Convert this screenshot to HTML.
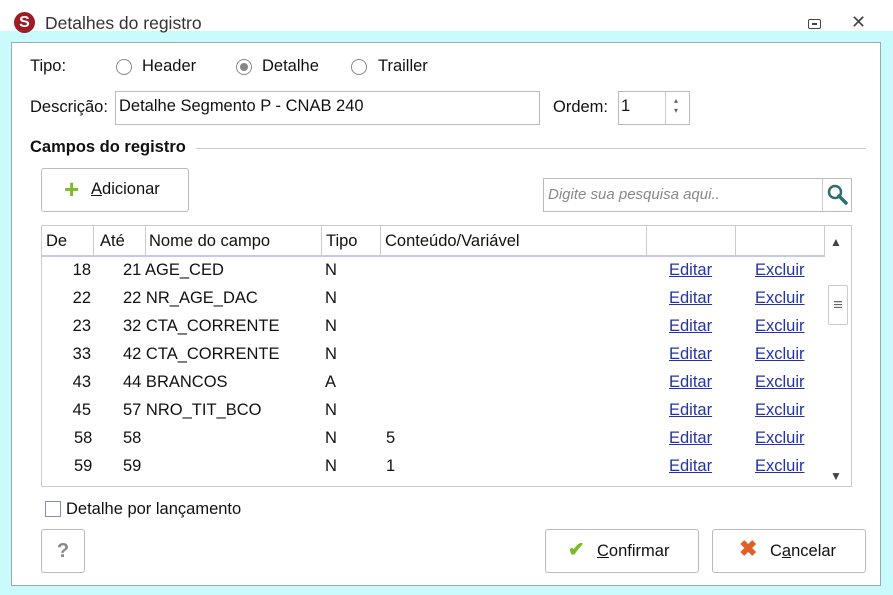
<!DOCTYPE html>
<html><head><meta charset="utf-8"><style>
*{margin:0;padding:0;box-sizing:border-box}
body{width:893px;height:595px;overflow:hidden;background:#c9fbfd;font-family:"Liberation Sans",sans-serif;font-size:16.5px;line-height:20px;color:#111;position:relative}
.a{position:absolute;white-space:nowrap}
#top{left:0;top:0;width:893px;height:31px;background:#fff}
#panel{left:11px;top:42px;width:870px;height:544px;background:#fff;border:1px solid #9aa}
.radio{width:16px;height:16px;border:1px solid #888;border-radius:50%;background:#fff}
.input{border:1px solid #bbb;background:#fff}
.btn{border:1px solid #bbb;border-radius:3px;background:#fff}
.cell{position:absolute;top:0;height:31px;border-right:1px solid #ccc;line-height:31px;padding-left:6px}
.lnk{color:#2233aa;text-decoration:underline}
.r{text-align:right;width:40px}
</style></head><body>
<div id="top" class="a"></div>
<div class="a" style="left:14px;top:12px;width:21px;height:21px;border-radius:50%;background:#9e1c24;color:#fff;font-weight:bold;font-size:16px;text-align:center;line-height:21px">S</div>
<div class="a" style="left:45px;top:13px;font-size:17.5px;color:#333">Detalhes do registro</div>
<div class="a" style="left:808px;top:19px;width:13px;height:10px;border:1.5px solid #444;border-radius:2px"></div>
<div class="a" style="left:812px;top:23px;width:5px;height:2px;background:#444"></div>
<div class="a" style="left:851px;top:12px;font-size:18px;color:#444">✕</div>
<div id="panel" class="a"></div>

<div class="a" style="left:30px;top:56px">Tipo:</div>
<div class="a radio" style="left:116px;top:59px"></div>
<div class="a" style="left:142px;top:56px">Header</div>
<div class="a radio" style="left:236px;top:59px"></div>
<div class="a" style="left:240px;top:63px;width:8px;height:8px;border-radius:50%;background:#888"></div>
<div class="a" style="left:262px;top:56px">Detalhe</div>
<div class="a radio" style="left:351px;top:59px"></div>
<div class="a" style="left:378px;top:56px">Trailler</div>

<div class="a" style="left:30px;top:97px">Descrição:</div>
<div class="a input" style="left:115px;top:91px;width:425px;height:34px"></div>
<div class="a" style="left:119px;top:96px">Detalhe Segmento P - CNAB 240</div>
<div class="a" style="left:553px;top:97px">Ordem:</div>
<div class="a input" style="left:618px;top:91px;width:72px;height:34px"></div>
<div class="a" style="left:665px;top:92px;width:1px;height:32px;background:#ccc"></div>
<div class="a" style="left:621px;top:96px">1</div>
<div class="a" style="left:674px;top:91px;font-size:8px;color:#666">▴</div>
<div class="a" style="left:674px;top:101px;font-size:8px;color:#666">▾</div>

<div class="a" style="left:30px;top:137px;font-weight:bold">Campos do registro</div>
<div class="a" style="left:196px;top:148px;width:670px;height:1px;background:#ccc"></div>

<div class="a btn" style="left:41px;top:168px;width:148px;height:44px"></div>
<div class="a" style="left:64px;top:176px;color:#7cba2a;font-size:26px;font-weight:bold;line-height:26px">+</div>
<div class="a" style="left:91px;top:179px"><u>A</u>dicionar</div>

<div class="a input" style="left:543px;top:178px;width:309px;height:34px"></div>
<div class="a" style="left:822px;top:179px;width:1px;height:32px;background:#ccc"></div>
<div class="a" style="left:548px;top:185px;font-style:italic;color:#888;font-size:15px">Digite sua pesquisa aqui..</div>
<svg class="a" style="left:826px;top:183px" width="24" height="24"><circle cx="9" cy="9" r="6" fill="none" stroke="#2e6e6e" stroke-width="2.5"/><path d="M13 13 L20 20" stroke="#2e6e6e" stroke-width="3.5" stroke-linecap="round"/></svg>

<div class="a" style="left:41px;top:225px;width:811px;height:262px;border:1px solid #ccc;background:#fff">
 <div class="a" style="left:0;top:0;width:783px;height:31px;border-bottom:2px solid #c8c8e8">
  <div class="cell" style="left:0;width:52px;padding-left:4px">De</div>
  <div class="cell" style="left:52px;width:52px">Até</div>
  <div class="cell" style="left:104px;width:176px;padding-left:3px">Nome do campo</div>
  <div class="cell" style="left:280px;width:59px;padding-left:4px">Tipo</div>
  <div class="cell" style="left:339px;width:266px;padding-left:4px">Conteúdo/Variável</div>
  <div class="cell" style="left:605px;width:89px"></div>
  <div class="cell" style="left:694px;width:89px"></div>
 </div>
 <div class="a" style="left:788px;top:6px;font-size:12px;color:#444">▲</div>
 <div class="a" style="left:786px;top:59px;width:20px;height:40px;border:1px solid #ccc;border-radius:2px;text-align:center;line-height:38px;color:#666">≡</div>
 <div class="a" style="left:788px;top:240px;font-size:12px;color:#444">▼</div>
</div>

<div style="position:absolute;left:41px;top:257px">
<div class="a r" style="top:3px;left:10px">18</div><div class="a" style="top:3px;left:82px">21 AGE_CED</div><div class="a" style="top:3px;left:284px">N</div><div class="a lnk" style="top:3px;left:628px">Editar</div><div class="a lnk" style="top:3px;left:714px">Excluir</div>
<div class="a r" style="top:31px;left:10px">22</div><div class="a" style="top:31px;left:82px">22 NR_AGE_DAC</div><div class="a" style="top:31px;left:284px">N</div><div class="a lnk" style="top:31px;left:628px">Editar</div><div class="a lnk" style="top:31px;left:714px">Excluir</div>
<div class="a r" style="top:59px;left:10px">23</div><div class="a" style="top:59px;left:82px">32 CTA_CORRENTE</div><div class="a" style="top:59px;left:284px">N</div><div class="a lnk" style="top:59px;left:628px">Editar</div><div class="a lnk" style="top:59px;left:714px">Excluir</div>
<div class="a r" style="top:87px;left:10px">33</div><div class="a" style="top:87px;left:82px">42 CTA_CORRENTE</div><div class="a" style="top:87px;left:284px">N</div><div class="a lnk" style="top:87px;left:628px">Editar</div><div class="a lnk" style="top:87px;left:714px">Excluir</div>
<div class="a r" style="top:115px;left:10px">43</div><div class="a" style="top:115px;left:82px">44 BRANCOS</div><div class="a" style="top:115px;left:284px">A</div><div class="a lnk" style="top:115px;left:628px">Editar</div><div class="a lnk" style="top:115px;left:714px">Excluir</div>
<div class="a r" style="top:143px;left:10px">45</div><div class="a" style="top:143px;left:82px">57 NRO_TIT_BCO</div><div class="a" style="top:143px;left:284px">N</div><div class="a lnk" style="top:143px;left:628px">Editar</div><div class="a lnk" style="top:143px;left:714px">Excluir</div>
<div class="a" style="top:171px;left:33px">58</div><div class="a" style="top:171px;left:82px">58</div><div class="a" style="top:171px;left:284px">N</div><div class="a" style="top:171px;left:345px">5</div><div class="a lnk" style="top:171px;left:628px">Editar</div><div class="a lnk" style="top:171px;left:714px">Excluir</div>
<div class="a" style="top:199px;left:33px">59</div><div class="a" style="top:199px;left:82px">59</div><div class="a" style="top:199px;left:284px">N</div><div class="a" style="top:199px;left:345px">1</div><div class="a lnk" style="top:199px;left:628px">Editar</div><div class="a lnk" style="top:199px;left:714px">Excluir</div>
</div>

<div class="a" style="left:45px;top:501px;width:16px;height:16px;border:1px solid #8888bb;background:#fff"></div>
<div class="a" style="left:66px;top:499px">Detalhe por lançamento</div>

<div class="a btn" style="left:41px;top:529px;width:44px;height:44px;text-align:center;line-height:42px;color:#888;font-size:20px;font-weight:bold">?</div>
<div class="a btn" style="left:545px;top:529px;width:154px;height:44px"></div>
<div class="a" style="left:568px;top:540px;color:#7cba2a;font-size:20px;font-weight:bold">✔</div>
<div class="a" style="left:597px;top:541px"><u>C</u>onfirmar</div>
<div class="a btn" style="left:712px;top:529px;width:154px;height:44px"></div>
<div class="a" style="left:739px;top:539px;color:#e0602a;font-size:22px;font-weight:bold">✖</div>
<div class="a" style="left:770px;top:541px">C<u>a</u>ncelar</div>
</body></html>
